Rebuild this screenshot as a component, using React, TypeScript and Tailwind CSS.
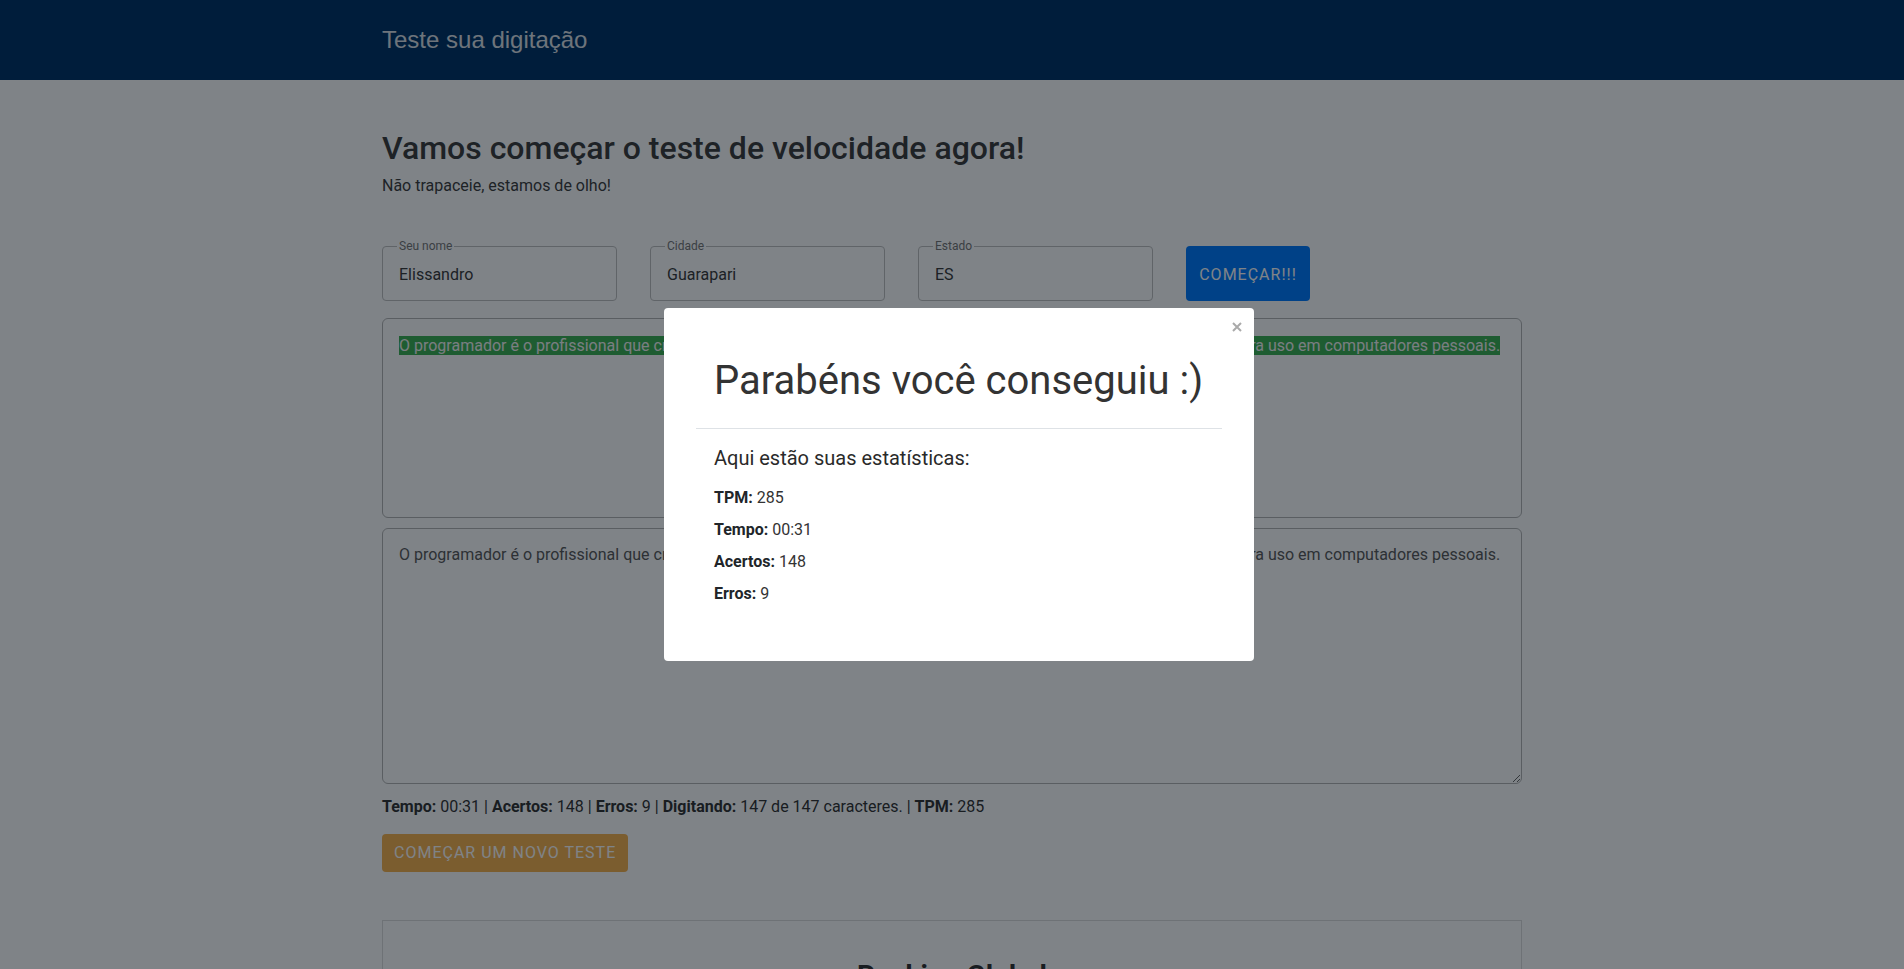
import React from 'react'

const texto =
  'O programador é o profissional que cria, desenvolve, testa e mantém programas, sistemas e aplicativos de softwares para uso em computadores pessoais.'

function Campo({ label, value }: { label: string; value: string }) {
  return (
    <fieldset className="w-[235px] min-w-0 rounded-[4px] border border-[#c0c0c0] px-[14px] pb-[13px]">
      <legend className="px-[2px] text-[12px] leading-[14px] text-[#777]">{label}</legend>
      <div className="mt-[10px] pl-[2px] text-[16px] leading-6 text-[#3a3a3a]">{value}</div>
    </fieldset>
  )
}

function Estatistica({ label, value }: { label: string; value: string }) {
  return (
    <p className="text-[16px] leading-6 text-[#333]">
      <b className="font-bold text-[#212529]">{label}</b> {value}
    </p>
  )
}

export default function App() {
  return (
    <div className="relative h-[969px] overflow-hidden bg-white font-['Roboto',sans-serif] text-[#333]">
      <header className="flex h-[80px] items-center bg-[#003366]">
        <div className="mx-auto w-[1140px]">
          <span className="font-['Liberation_Sans',Arial,sans-serif] text-[24px] text-[#dde0e6]">
            Teste sua digitação
          </span>
        </div>
      </header>

      <main className="mx-auto w-[1140px] pt-[49px]">
        <h1 className="text-[32px] leading-[1.2] font-medium text-[#3c3c3c]">
          Vamos começar o teste de velocidade agora!
        </h1>
        <p className="mt-[7px] text-[16px] leading-6 text-[#3c3c3c]">Não trapaceie, estamos de olho!</p>

        <div className="mt-[41px] flex items-end gap-[33px]">
          <Campo label="Seu nome" value="Elissandro" />
          <Campo label="Cidade" value="Guarapari" />
          <Campo label="Estado" value="ES" />
          <button className="h-[55px] w-[124px] rounded-[4px] bg-[#007bff] pt-[2px] text-[16px] tracking-[1px] text-white">
            COMEÇAR!!!
          </button>
        </div>

        <div className="mt-[17px] h-[200px] rounded-[6px] border border-[#b4b4b4] px-4 pt-[15px] text-[16px] leading-6">
          <span className="bg-[#3db052] text-[#f4f4f4]">{texto}</span>
        </div>

        <textarea
          className="mt-[10px] block h-[256px] w-full rounded-[6px] border border-[#b4b4b4] px-4 py-[14px] text-[16px] leading-6 text-[#5a5a5a]"
          value={texto}
          readOnly
        />

        <p className="mt-[11px] text-[16px] leading-6 text-[#333]">
          <b className="font-bold">Tempo:</b> 00:31 | <b className="font-bold">Acertos:</b> 148 |{' '}
          <b className="font-bold">Erros:</b> 9 | <b className="font-bold">Digitando:</b> 147 de 147 caracteres. |{' '}
          <b className="font-bold">TPM:</b> 285
        </p>

        <button className="mt-[15px] h-[38px] rounded-[4px] bg-[#f7b24f] px-[12px] text-[16px] tracking-[1px] text-white">
          COMEÇAR UM NOVO TESTE
        </button>

        <section className="mt-[48px] h-[300px] border border-[#dcdcdc] pt-[38px]">
          <h2 className="text-center text-[28px] leading-[1.2] font-bold text-[#333]">Ranking Global</h2>
        </section>
      </main>

      <div className="absolute inset-0 bg-[rgba(0,7,15,0.5)]" />

      <div className="absolute left-[664px] top-[308px] h-[353px] w-[590px] rounded-[4px] bg-white px-8">
        <button className="absolute right-[12px] top-[14px] h-[10px] w-[10px]">
          <svg viewBox="0 0 10 10" width="10" height="10">
            <path d="M1 1L9 9M9 1L1 9" stroke="#aaa" strokeWidth="2" />
          </svg>
        </button>
        <h2 className="mt-[49px] px-[18px] text-[40px] leading-[48px] text-[#333]">Parabéns você conseguiu :)</h2>
        <hr className="mt-[23px] border-t border-[#dee2e6]" />
        <h3 className="mt-[17px] px-[18px] text-[20px] leading-6 text-[#2a2a2a]">Aqui estão suas estatísticas:</h3>
        <div className="mt-[16px] flex flex-col gap-2 px-[18px]">
          <Estatistica label="TPM:" value="285" />
          <Estatistica label="Tempo:" value="00:31" />
          <Estatistica label="Acertos:" value="148" />
          <Estatistica label="Erros:" value="9" />
        </div>
      </div>
    </div>
  )
}
